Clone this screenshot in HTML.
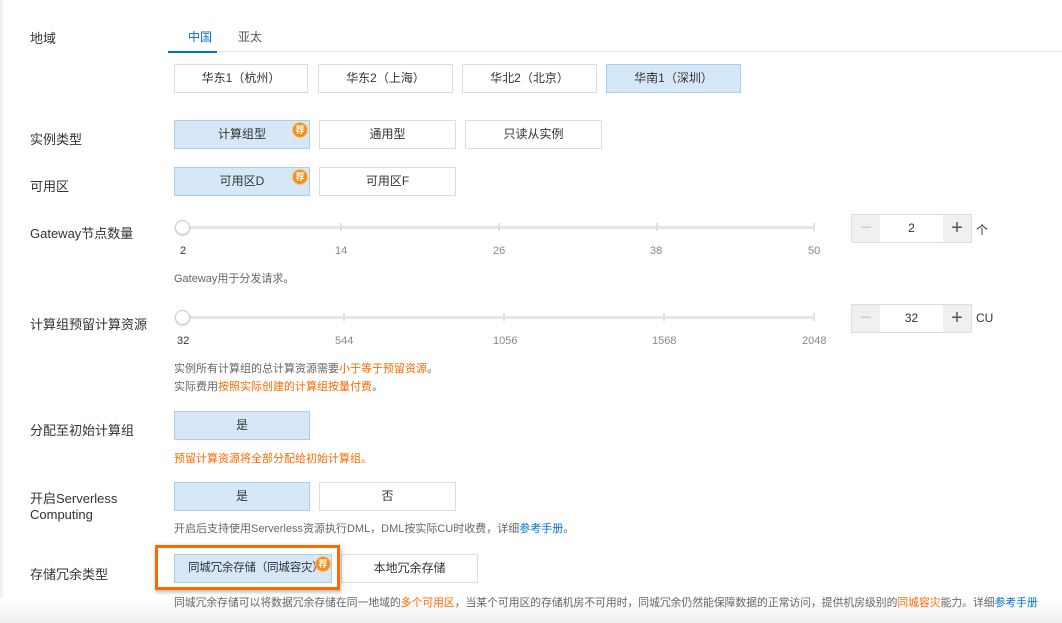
<!DOCTYPE html>
<html><head><meta charset="utf-8"><style>
*{margin:0;padding:0;box-sizing:border-box}
body{width:1062px;height:623px;overflow:hidden;background:#fff;font-family:"Liberation Sans","Noto Sans CJK SC",sans-serif;color:#333;position:relative}
.a{position:absolute;white-space:nowrap}
.lbl{font-size:13px;color:#333}
.btn{position:absolute;height:29px;border:1px solid #ddd;background:#fff;font-size:12px;color:#333;text-align:center;line-height:27px}
.on{background:#d6e8f7;border-color:#a9cdea}
.badge{position:absolute;width:14px;height:14px;border-radius:50%;background:#f39019;color:#fff;font-size:9px;line-height:14px;text-align:center;font-weight:bold;box-shadow:0 0 0 1px #f7c27a}
.note{font-size:11px;color:#666}
.or{color:#ff6a00}
.bl{color:#0070cc}
.track{position:absolute;height:3px;background:#e6e6e6}
.tick{position:absolute;width:2px;height:8px;background:#e0e0e0}
.knob{position:absolute;width:15px;height:15px;border-radius:50%;background:#fff;border:1px solid #c8c8c8;box-shadow:0 1px 2px rgba(0,0,0,.15)}
.tl{font-size:11px;color:#888}
.num{position:absolute;width:121px;height:29px;border:1px solid #ddd;background:#fff}
.num .m,.num .p{position:absolute;top:0;width:28px;height:27px;background:#f0f0f0;text-align:center;line-height:26px;font-size:20px}
.num .m{left:0;color:#ccc}.num .p{right:0;color:#555}
.num .v{position:absolute;left:28px;right:28px;text-align:center;line-height:27px;font-size:12px}
</style></head><body>
<div class="a" style="left:0;top:0;width:3px;height:623px;background:#f2f2f4"></div>
<div class="a" style="left:0;top:598px;width:1062px;height:25px;background:linear-gradient(#fff,#efefef)"></div>

<div class="a lbl" style="left:30px;top:28px">地域</div>
<div class="a" style="left:188px;top:28px;font-size:12px;color:#0070cc">中国</div>
<div class="a" style="left:238px;top:28px;font-size:12px;color:#555">亚太</div>
<div class="a" style="left:168px;top:51px;width:894px;height:1px;background:#e6e6e6"></div>
<div class="a" style="left:168px;top:51px;width:49px;height:2px;background:#0070cc"></div>
<div class="btn" style="left:174px;top:64px;width:134px">华东1（杭州）</div>
<div class="btn" style="left:318px;top:64px;width:135px">华东2（上海）</div>
<div class="btn" style="left:462px;top:64px;width:135px">华北2（北京）</div>
<div class="btn on" style="left:606px;top:64px;width:135px">华南1（深圳）</div>

<div class="a lbl" style="left:30px;top:129px">实例类型</div>
<div class="btn on" style="left:174px;top:120px;width:136px">计算组型</div>
<div class="badge" style="left:293px;top:123px">荐</div>
<div class="btn" style="left:319px;top:120px;width:137px">通用型</div>
<div class="btn" style="left:465px;top:120px;width:137px">只读从实例</div>

<div class="a lbl" style="left:30px;top:176px">可用区</div>
<div class="btn on" style="left:174px;top:167px;width:136px">可用区D</div>
<div class="badge" style="left:293px;top:170px">荐</div>
<div class="btn" style="left:319px;top:167px;width:137px">可用区F</div>

<div class="a lbl" style="left:30px;top:223px">Gateway节点数量</div>
<div class="track" style="left:182px;top:226px;width:633px"></div>
<div class="tick" style="left:340px;top:223px"></div><div class="tick" style="left:498px;top:223px"></div><div class="tick" style="left:656px;top:223px"></div><div class="tick" style="left:813px;top:223px"></div>
<div class="knob" style="left:175px;top:220px"></div>
<div class="a tl" style="left:180px;top:245px;color:#333">2</div>
<div class="a tl" style="left:335px;top:245px">14</div>
<div class="a tl" style="left:493px;top:245px">26</div>
<div class="a tl" style="left:650px;top:245px">38</div>
<div class="a tl" style="left:808px;top:245px">50</div>
<div class="a note" style="left:174px;top:270px">Gateway用于分发请求。</div>
<div class="num" style="left:851px;top:214px"><div class="m">−</div><div class="v">2</div><div class="p">+</div></div>
<div class="a" style="left:976px;top:221px;font-size:12px">个</div>

<div class="a lbl" style="left:30px;top:314px">计算组预留计算资源</div>
<div class="track" style="left:182px;top:316px;width:633px"></div>
<div class="tick" style="left:343px;top:313px"></div><div class="tick" style="left:503px;top:313px"></div><div class="tick" style="left:663px;top:313px"></div><div class="tick" style="left:813px;top:313px"></div>
<div class="knob" style="left:175px;top:310px"></div>
<div class="a tl" style="left:177px;top:335px;color:#333">32</div>
<div class="a tl" style="left:335px;top:335px">544</div>
<div class="a tl" style="left:493px;top:335px">1056</div>
<div class="a tl" style="left:652px;top:335px">1568</div>
<div class="a tl" style="left:802px;top:335px">2048</div>
<div class="a note" style="left:174px;top:360px">实例所有计算组的总计算资源需要<span class="or">小于等于预留资源</span>。</div>
<div class="a note" style="left:174px;top:378px">实际费用<span class="or">按照实际创建的计算组按量付费</span>。</div>
<div class="num" style="left:851px;top:304px"><div class="m">−</div><div class="v">32</div><div class="p">+</div></div>
<div class="a" style="left:976px;top:311px;font-size:12px">CU</div>

<div class="a lbl" style="left:30px;top:420px">分配至初始计算组</div>
<div class="btn on" style="left:174px;top:411px;width:136px">是</div>
<div class="a note or" style="left:174px;top:450px">预留计算资源将全部分配给初始计算组。</div>

<div class="a lbl" style="left:30px;top:491px;line-height:16px">开启Serverless<br>Computing</div>
<div class="btn on" style="left:174px;top:482px;width:136px">是</div>
<div class="btn" style="left:319px;top:482px;width:137px">否</div>
<div class="a note" style="left:174px;top:520px">开启后支持使用Serverless资源执行DML，DML按实际CU时收费，详细<span class="bl">参考手册</span>。</div>

<div class="a lbl" style="left:30px;top:564px">存储冗余类型</div>
<div class="btn on" style="left:174px;top:554px;width:158px;font-size:11.5px;text-align:left;padding-left:13px;letter-spacing:-0.2px">同城冗余存储（同城容灾）</div>
<div class="badge" style="left:316px;top:557px">荐</div>
<div class="btn" style="left:341px;top:554px;width:137px">本地冗余存储</div>
<div class="a" style="left:155px;top:545px;width:185px;height:45px;border:3px solid #ff6a00;box-shadow:1px 2px 4px rgba(0,0,0,.3)"></div>
<div class="a note" style="left:174px;top:594px;font-size:10.8px">同城冗余存储可以将数据冗余存储在同一地域的<span class="or">多个可用区</span>，当某个可用区的存储机房不可用时，同城冗余仍然能保障数据的正常访问，提供机房级别的<span class="or">同城容灾</span>能力。详细<span class="bl">参考手册</span></div>
</body></html>
